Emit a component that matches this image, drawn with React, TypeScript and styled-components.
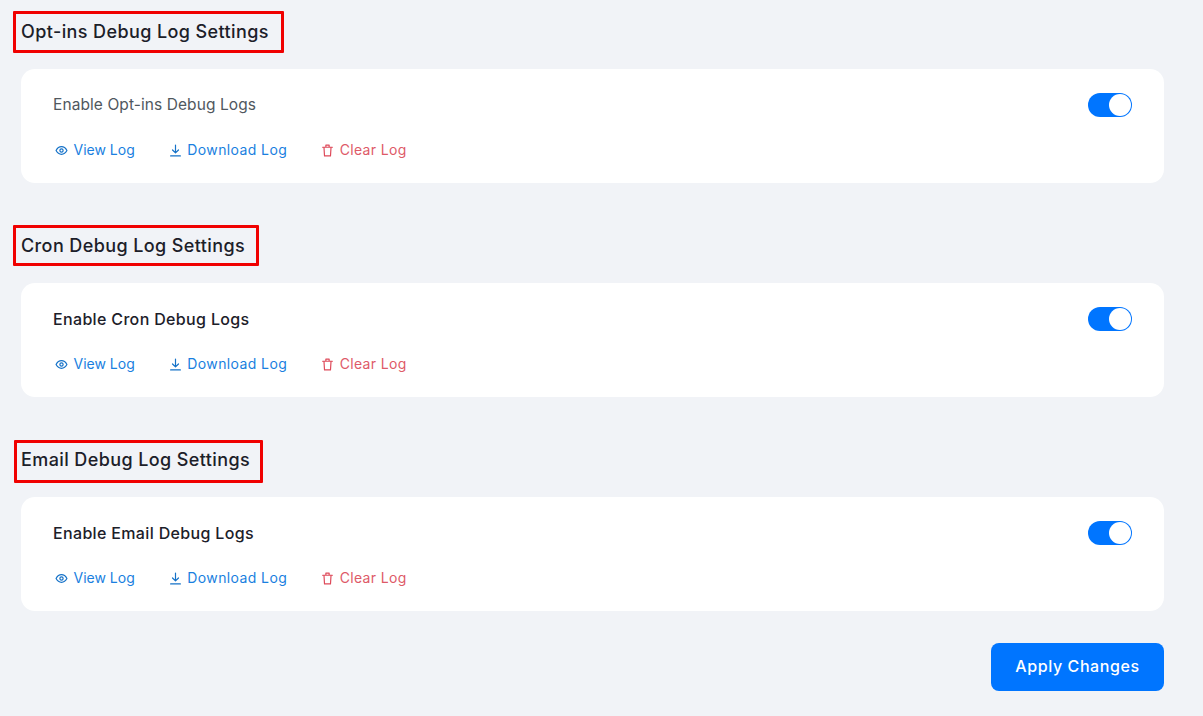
import React from "react";
import styled, { createGlobalStyle } from "styled-components";

const Global = createGlobalStyle`
  html, body { margin: 0; padding: 0; background: #f1f3f7; }
  body { font-family: Inter, "Open Sans", sans-serif; width: 1203px; height: 716px; overflow: hidden; }
`;

const Page = styled.main`
  display: flex;
  flex-direction: column;
  padding: 18px 39px 0 21px;
`;

const Section = styled.section`
  display: flex;
  flex-direction: column;
  gap: 23px;
  margin-bottom: 49px;
  &:nth-of-type(3) { margin-bottom: 32px; }
`;

const Heading = styled.h2`
  position: relative;
  margin: 0;
  font-size: 18px;
  line-height: 28px;
  font-weight: 500;
  color: #1c2029;
  letter-spacing: 0.4px;
  white-space: nowrap;
  width: max-content;
`;

const Highlight = styled.span<{ $l: number; $r: number; $t: number; $b: number }>`
  position: absolute;
  left: ${p => -p.$l}px;
  right: ${p => -p.$r}px;
  top: ${p => -p.$t}px;
  bottom: ${p => -p.$b}px;
  border: 3.5px solid #f00000;
  border-radius: 1px;
`;

const Card = styled.div`
  background: #fff;
  border-radius: 14px;
  height: 114px;
  box-sizing: border-box;
  padding: 24px 32px 0;
  display: flex;
  flex-direction: column;
`;

const Row = styled.div`
  display: flex;
  align-items: center;
  justify-content: space-between;
  height: 24px;
`;

const Label = styled.span<{ $muted?: boolean }>`
  font-size: ${p => (p.$muted ? "15.5px" : "16px")};
  font-weight: ${p => (p.$muted ? 400 : 500)};
  color: ${p => (p.$muted ? "#50575e" : "#1c2029")};
  letter-spacing: ${p => (p.$muted ? "0.08px" : "0.34px")};
  padding-bottom: 1px;
`;

const Toggle = styled.span`
  position: relative;
  display: block;
  width: 44px;
  height: 24px;
  border-radius: 12px;
  background: #0075ff;
  box-sizing: border-box;
  &::after {
    content: "";
    position: absolute;
    right: 1px;
    top: 1px;
    width: 22px;
    height: 22px;
    border-radius: 50%;
    background: #fff;
  }
`;

const Actions = styled.div`
  display: flex;
  gap: 34px;
  margin-top: 23px;
  padding-left: 2px;
`;

const Action = styled.a<{ $danger?: boolean; $track: number }>`
  display: inline-flex;
  align-items: center;
  gap: 5.5px;
  font-size: 14px;
  line-height: 20px;
  letter-spacing: ${p => p.$track}px;
  color: ${p => (p.$danger ? "#de5a68" : "#1a7fe0")};
  svg { flex: none; color: ${p => (p.$danger ? "#de4a5a" : "#1572c8")}; }
`;

const Footer = styled.div`
  display: flex;
  justify-content: flex-end;
`;

const Apply = styled.button`
  width: 173px;
  height: 48px;
  border: 0;
  border-radius: 8px;
  background: #0075ff;
  color: #fff;
  font: 500 16px Inter, sans-serif;
  letter-spacing: 0.6px;
  padding: 0 0 2px;
`;

const Eye = () => (
  <svg width="13" height="13" viewBox="0 0 24 24" fill="none" stroke="currentColor" strokeWidth="2.2" strokeLinecap="round" strokeLinejoin="round">
    <path d="M2 12c2.4-4.6 5.800-7 10-7s7.600 2.400 10 7c-2.400 4.600-5.800 7-10 7S4.400 16.600 2 12Z" />
    <circle cx="12" cy="12" r="3" />
  </svg>
);
const Download = () => (
  <svg width="13" height="13" viewBox="0 0 24 24" fill="none" stroke="currentColor" strokeWidth="2.2" strokeLinecap="round" strokeLinejoin="round">
    <path d="M12 2v14M6.500 11l5.500 5.500 5.500-5.500M3 22h18" />
  </svg>
);
const Trash = () => (
  <svg width="13" height="13" viewBox="0 0 24 24" fill="none" stroke="currentColor" strokeWidth="2.2" strokeLinecap="round" strokeLinejoin="round">
    <path d="M3 6h18M5.500 6l1 16h11l1-16M9 6V2h6v4" />
  </svg>
);

const data = [
  { title: "Opt-ins Debug Log Settings", label: "Enable Opt-ins Debug Logs", muted: true, box: [8, 15, 7, 7] },
  { title: "Cron Debug Log Settings", label: "Enable Cron Debug Logs", muted: false, box: [8, 14, 7, 6] },
  { title: "Email Debug Log Settings", label: "Enable Email Debug Logs", muted: false, box: [7, 13, 6, 9] },
];

export default function App() {
  return (
    <>
      <Global />
      <Page>
        {data.map(d => (
          <Section key={d.title}>
            <Heading>
              {d.title}
              <Highlight $l={d.box[0]} $r={d.box[1]} $t={d.box[2]} $b={d.box[3]} />
            </Heading>
            <Card>
              <Row>
                <Label $muted={d.muted}>{d.label}</Label>
                <Toggle />
              </Row>
              <Actions>
                <Action $track={0}><Eye />View Log</Action>
                <Action $track={0.4}><Download />Download Log</Action>
                <Action $danger $track={0.33}><Trash />Clear Log</Action>
              </Actions>
            </Card>
          </Section>
        ))}
        <Footer><Apply>Apply Changes</Apply></Footer>
      </Page>
    </>
  );
}
